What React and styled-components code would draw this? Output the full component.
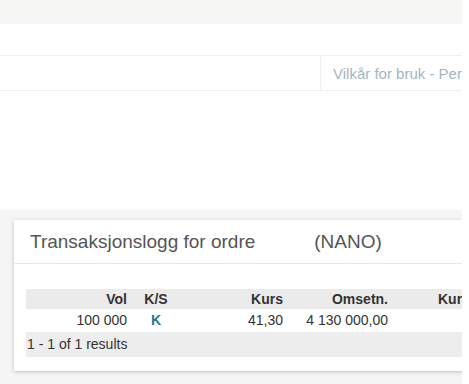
import styled, { createGlobalStyle } from 'styled-components'

const GlobalStyle = createGlobalStyle`
  html, body {
    margin: 0;
    padding: 0;
    background: #fff;
    font-family: 'Liberation Sans', Arial, sans-serif;
  }
`

const Page = styled.div`
  width: 462px;
  height: 384px;
  overflow: hidden;
  display: flex;
  flex-direction: column;
`

const TopBand = styled.div`
  height: 24px;
  background: #f6f6f4;
  flex-shrink: 0;
`

const LinkBar = styled.div`
  margin-top: 31px;
  height: 34px;
  display: flex;
  border-top: 1px solid #efefef;
  border-bottom: 1px solid #efefef;
  flex-shrink: 0;
`

const LinkSpacer = styled.div`
  width: 320px;
  flex-shrink: 0;
  border-right: 1px solid #f0f0f0;
`

const FooterLink = styled.a`
  display: flex;
  align-items: center;
  padding-left: 12px;
  font-size: 15px;
  color: #a3b6bd;
  white-space: nowrap;
  text-decoration: none;
`

const Section = styled.div`
  margin-top: 119px;
  flex: 1;
  background: #f5f5f5;
  padding: 10px 0 0 14px;
`

const Card = styled.div`
  width: 520px;
  background: #fff;
  box-shadow: 0 1px 4px rgba(0, 0, 0, 0.22);
`

const CardHead = styled.div`
  height: 43px;
  display: flex;
  align-items: center;
  padding-left: 16px;
  border-bottom: 1px solid #e8e8e8;
  font-size: 19px;
  color: #555;
  white-space: nowrap;
`

const Ticker = styled.span`
  margin-left: 59px;
`

const CardBody = styled.div`
  padding: 25px 0 14px 12px;
`

const Grid = styled.div`
  position: relative;
  display: grid;
  grid-template-columns: 105px 50px 106px 105px 106px;
  font-size: 14px;
  color: #333;
`

const Row = styled.div`
  display: contents;
`

const Cell = styled.div`
  height: ${(p) => (p.$head ? '20px' : '23px')};
  line-height: ${(p) => (p.$head ? '20px' : '23px')};
  padding: 0 4px;
  text-align: ${(p) => p.$align || 'right'};
  font-weight: ${(p) => (p.$head ? 'bold' : 'normal')};
  background: ${(p) => (p.$head ? '#ebebeb' : '#fff')};
  white-space: nowrap;
  overflow: hidden;
`

const Side = styled.span`
  color: #1d7b8e;
  font-weight: bold;
`

const Summary = styled.div`
  grid-column: 1 / -1;
  height: 25px;
  line-height: 24px;
  padding-left: 1px;
  background: #ededed;
`

// hvit fade over kanten av raden, slik som i skjermbildet
const Fade = styled.div`
  position: absolute;
  left: 422px;
  top: 20px;
  width: 16px;
  height: 23px;
  background: radial-gradient(ellipse at right, #fff 60%, rgba(255, 255, 255, 0) 100%);
`

const columns = [
  { key: 'vol', label: 'Vol' },
  { key: 'side', label: 'K/S', align: 'center' },
  { key: 'kurs', label: 'Kurs' },
  { key: 'oms', label: 'Omsetn.' },
  { key: 'kurtasje', label: 'Kurtasje' },
]

const trades = [
  { vol: '100 000', side: 'K', kurs: '41,30', oms: '4 130 000,00', kurtasje: '123,90' },
]

export default function App() {
  return (
    <Page>
      <GlobalStyle />
      <TopBand />
      <LinkBar>
        <LinkSpacer />
        <FooterLink href="#">Vilkår for bruk - Personvern</FooterLink>
      </LinkBar>
      <Section>
        <Card>
          <CardHead>
            Transaksjonslogg for ordre
            <Ticker>(NANO)</Ticker>
          </CardHead>
          <CardBody>
            <Grid>
              <Row>
                {columns.map((c) => (
                  <Cell key={c.key} $head $align={c.align}>
                    {c.label}
                  </Cell>
                ))}
              </Row>
              {trades.map((t, i) => (
                <Row key={i}>
                  {columns.map((c) => (
                    <Cell key={c.key} $align={c.align}>
                      {c.key === 'side' ? <Side>{t.side}</Side> : t[c.key]}
                    </Cell>
                  ))}
                </Row>
              ))}
              <Summary>1 - 1 of 1 results</Summary>
              <Fade />
            </Grid>
          </CardBody>
        </Card>
      </Section>
    </Page>
  )
}
